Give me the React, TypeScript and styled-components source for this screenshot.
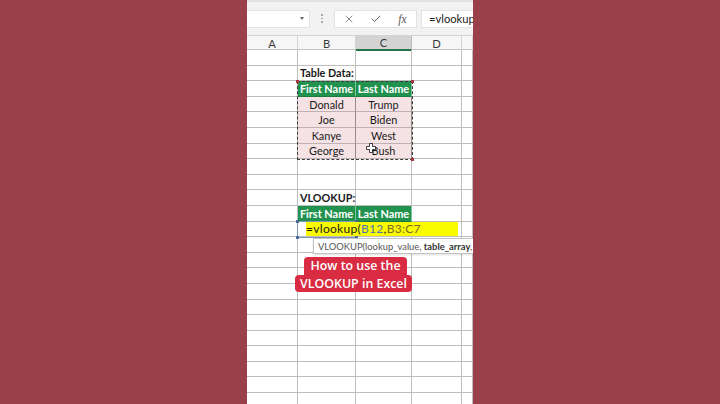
import React from 'react';
import styled, { createGlobalStyle } from 'styled-components';
import { X, Check } from 'lucide-react';

type Kind = 'plain' | 'label' | 'head' | 'data' | 'formula';

interface CellSpec {
  kind: Kind;
  text?: string;
}

const COLS = ['A', 'B', 'C', 'D', ''];
const ROW_COUNT = 23;

const GlobalStyle = createGlobalStyle`
  html, body {
    margin: 0;
    padding: 0;
  }
  body {
    background: #9a404a;
    font-family: Lato, "Liberation Sans", sans-serif;
  }
`;

const Page = styled.div`
  width: 720px;
  height: 404px;
  display: flex;
  justify-content: center;
  background: #9a404a;
  overflow: hidden;
`;

const Strip = styled.div`
  position: relative;
  width: 226px;
  height: 404px;
  background: #fff;
  overflow: hidden;
  display: flex;
  flex-direction: column;
`;

const Toolbar = styled.div`
  flex: none;
  height: 36px;
  box-sizing: border-box;
  background: #f2f2f2;
  border-top: 2px solid #e2e2e2;
  border-bottom: 1px solid #d4d4d4;
  display: flex;
  align-items: center;
`;

const NameBox = styled.div`
  width: 63px;
  height: 18px;
  box-sizing: border-box;
  background: #fff;
  border: 1px solid #e3e3e3;
  border-left: none;
  display: flex;
  align-items: center;
  justify-content: flex-end;
  padding-right: 5px;
`;

const Caret = styled.span`
  width: 0;
  height: 0;
  border-left: 2.5px solid transparent;
  border-right: 2.5px solid transparent;
  border-top: 3px solid #666;
`;

const Grip = styled.div`
  width: 24px;
  display: flex;
  flex-direction: column;
  align-items: center;
  gap: 2px;

  span {
    width: 1.5px;
    height: 1.5px;
    background: #a8a8a8;
  }
`;

const FxBox = styled.div`
  width: 83px;
  height: 18px;
  box-sizing: border-box;
  background: #fff;
  border: 1px solid #e3e3e3;
  display: flex;
  align-items: center;
`;

const FxSlot = styled.div`
  flex: 1;
  display: flex;
  align-items: center;
  justify-content: center;
  color: #5a5a5a;
`;

const FxLabel = styled.span`
  font-family: "Liberation Serif", serif;
  font-style: italic;
  font-size: 11.5px;
  color: #5a5a5a;
`;

const FormulaInput = styled.div`
  flex: 1;
  margin-left: 4px;
  height: 18px;
  box-sizing: border-box;
  background: #fff;
  border: 1px solid #e3e3e3;
  border-right: none;
  display: flex;
  align-items: center;
  padding-left: 7px;
  font-size: 11.2px;
  color: #222;
  white-space: nowrap;
  overflow: hidden;
`;

const GRID_COLS = '51px 58px 56px 50px 11px';

const HeaderRow = styled.div`
  flex: none;
  height: 14px;
  display: grid;
  grid-template-columns: ${GRID_COLS};
  background: #f6f6f6;
  border-bottom: 1px solid #c2c2c2;
  box-sizing: border-box;
`;

const ColHead = styled.div<{ $selected?: boolean }>`
  box-sizing: border-box;
  display: flex;
  align-items: center;
  justify-content: center;
  font-size: 11.2px;
  color: #3a3a3a;
  border-right: 1px solid ${(p) => (p.$selected ? '#bdbdbd' : '#d4d4d4')};
  background: ${(p) => (p.$selected ? '#d3d3d3' : 'transparent')};
  border-bottom: ${(p) => (p.$selected ? '2px solid #217346' : 'none')};
`;

const Sheet = styled.div`
  position: relative;
  flex: 1;
  display: grid;
  grid-template-columns: ${GRID_COLS};
  grid-auto-rows: 15.6px;
`;

const Cell = styled.div<{ $kind: Kind }>`
  box-sizing: border-box;
  display: flex;
  align-items: center;
  white-space: nowrap;
  font-size: 10.9px;
  border-right: 1px solid #bdbdbd;
  border-bottom: 1px solid #bdbdbd;
  color: #1a1a1a;
  justify-content: ${(p) =>
    p.$kind === 'head' || p.$kind === 'data' ? 'center' : 'flex-start'};
  background: ${(p) =>
    p.$kind === 'head' ? '#22924f' : p.$kind === 'data' ? '#f4e2e4' : 'transparent'};
  font-weight: ${(p) => (p.$kind === 'head' || p.$kind === 'label' ? 700 : 400)};
  ${(p) => p.$kind === 'head' && 'color: #fff; border-right-color: #7cc49a; border-bottom-color: #1c7a42;'}
  ${(p) => p.$kind === 'data' && 'border-right-color: #978b8c; border-bottom-color: #bfb1b3;'}
  ${(p) => p.$kind === 'label' && 'padding-left: 2px; overflow: visible; font-size: 10.8px;'}
  ${(p) => p.$kind === 'formula' && 'padding-left: 8px; overflow: visible;'}
`;

const FormulaText = styled.span`
  position: relative;
  z-index: 1;
  flex: none;
  display: inline-flex;
  align-items: center;
  width: 152px;
  height: 14px;
  background: #fbfb00;
  font-size: 12px;
  letter-spacing: 0.3px;
  color: #1a1a1a;
`;

const Ref = styled.span<{ $color: string }>`
  color: ${(p) => p.$color};
`;

const Marquee = styled.div`
  position: absolute;
  left: 50px;
  top: 30.6px;
  width: 116px;
  height: 79px;
  box-sizing: border-box;
  border: 1.5px dashed #3c3c3c;
  pointer-events: none;
`;

const Handle = styled.span<{ $x: 'left' | 'right'; $y: 'top' | 'bottom'; $color: string }>`
  position: absolute;
  width: 3px;
  height: 3px;
  background: ${(p) => p.$color};
  ${(p) => p.$x}: -2px;
  ${(p) => p.$y}: -2px;
`;

const Selection = styled.div`
  position: absolute;
  left: 50px;
  top: 171px;
  width: 60px;
  height: 16.5px;
  box-sizing: border-box;
  border: 1px solid #8095bb;
  z-index: 0;
`;

const MoveCursor = styled.svg`
  position: absolute;
  left: 119px;
  top: 93px;
`;

const Tooltip = styled.div`
  position: absolute;
  left: 66px;
  top: 188px;
  height: 16px;
  box-sizing: border-box;
  padding: 0 4px;
  background: #fff;
  border: 1px solid #c4c4c4;
  box-shadow: 0 1px 2px rgba(0, 0, 0, 0.12);
  display: flex;
  align-items: center;
  white-space: nowrap;
  font-size: 9.4px;
  color: #555;
  z-index: 3;

  b {
    color: #333;
  }
`;

const Caption = styled.div`
  position: absolute;
  left: 48px;
  top: 207px;
  width: 117px;
  display: flex;
  flex-direction: column;
  align-items: center;
  z-index: 4;
`;

const CaptionLine = styled.div<{ $first?: boolean }>`
  background: #d92b41;
  color: #fff;
  font-family: "Open Sans", "Noto Sans", sans-serif;
  font-weight: 600;
  font-size: 12.4px;
  line-height: ${(p) => (p.$first ? '18px' : '17px')};
  padding: 0 ${(p) => (p.$first ? '6px' : '5px')};
  border-radius: ${(p) => (p.$first ? '4px 4px 0 0' : '4px')};
  margin-left: ${(p) => (p.$first ? '4px' : '0')};
  white-space: nowrap;
`;

const people = [
  ['Donald', 'Trump'],
  ['Joe', 'Biden'],
  ['Kanye', 'West'],
  ['George', 'Bush'],
];

const empty = (): CellSpec => ({ kind: 'plain' });

function buildRows(): CellSpec[][] {
  const rows: CellSpec[][] = [];
  for (let i = 0; i < ROW_COUNT; i++) {
    rows.push(COLS.map(empty));
  }
  rows[1][1] = { kind: 'label', text: 'Table Data:' };
  rows[2][1] = { kind: 'head', text: 'First Name' };
  rows[2][2] = { kind: 'head', text: 'Last Name' };
  people.forEach(([first, last], i) => {
    rows[3 + i][1] = { kind: 'data', text: first };
    rows[3 + i][2] = { kind: 'data', text: last };
  });
  rows[9][1] = { kind: 'label', text: 'VLOOKUP:' };
  rows[10][1] = { kind: 'head', text: 'First Name' };
  rows[10][2] = { kind: 'head', text: 'Last Name' };
  rows[11][1] = { kind: 'formula' };
  return rows;
}

const App: React.FC = () => {
  const rows = buildRows();

  return (
    <Page>
      <GlobalStyle />
      <Strip>
        <Toolbar>
          <NameBox>
            <Caret />
          </NameBox>
          <Grip>
            <span />
            <span />
            <span />
          </Grip>
          <FxBox>
            <FxSlot>
              <X size={12} strokeWidth={1.4} />
            </FxSlot>
            <FxSlot>
              <Check size={12} strokeWidth={1.8} />
            </FxSlot>
            <FxSlot>
              <FxLabel>fx</FxLabel>
            </FxSlot>
          </FxBox>
          <FormulaInput>=vlookup(</FormulaInput>
        </Toolbar>

        <HeaderRow>
          {COLS.map((c, i) => (
            <ColHead key={i} $selected={c === 'C'}>
              {c}
            </ColHead>
          ))}
        </HeaderRow>

        <Sheet>
          <Selection>
            <Handle $x="left" $y="top" $color="#4d6da0" />
            <Handle $x="right" $y="top" $color="#4d6da0" />
            <Handle $x="left" $y="bottom" $color="#4d6da0" />
            <Handle $x="right" $y="bottom" $color="#4d6da0" />
          </Selection>

          {rows.map((row, r) =>
            row.map((cell, c) => (
              <Cell key={`${r}-${c}`} $kind={cell.kind}>
                {cell.kind === 'formula' ? (
                  <FormulaText>
                    =vlookup(<Ref $color="#4b72b5">B12</Ref>,
                    <Ref $color="#7a6a22">B3:C7</Ref>
                  </FormulaText>
                ) : (
                  cell.text
                )}
              </Cell>
            ))
          )}

          <Marquee>
            <Handle $x="left" $y="top" $color="#a8343c" />
            <Handle $x="right" $y="top" $color="#a8343c" />
            <Handle $x="right" $y="bottom" $color="#a8343c" />
          </Marquee>

          <MoveCursor width="10" height="10" viewBox="0 0 20 20">
            <path
              d="M7 1 H13 V7 H19 V13 H13 V19 H7 V13 H1 V7 H7 Z"
              fill="#fff"
              stroke="#111"
              strokeWidth="1.6"
            />
          </MoveCursor>

          <Tooltip>
            VLOOKUP(lookup_value,&nbsp;<b>table_array</b>, col_index_num, [range_lookup])
          </Tooltip>

          <Caption>
            <CaptionLine $first>How to use the</CaptionLine>
            <CaptionLine>VLOOKUP in Excel</CaptionLine>
          </Caption>
        </Sheet>
      </Strip>
    </Page>
  );
};

export default App;
